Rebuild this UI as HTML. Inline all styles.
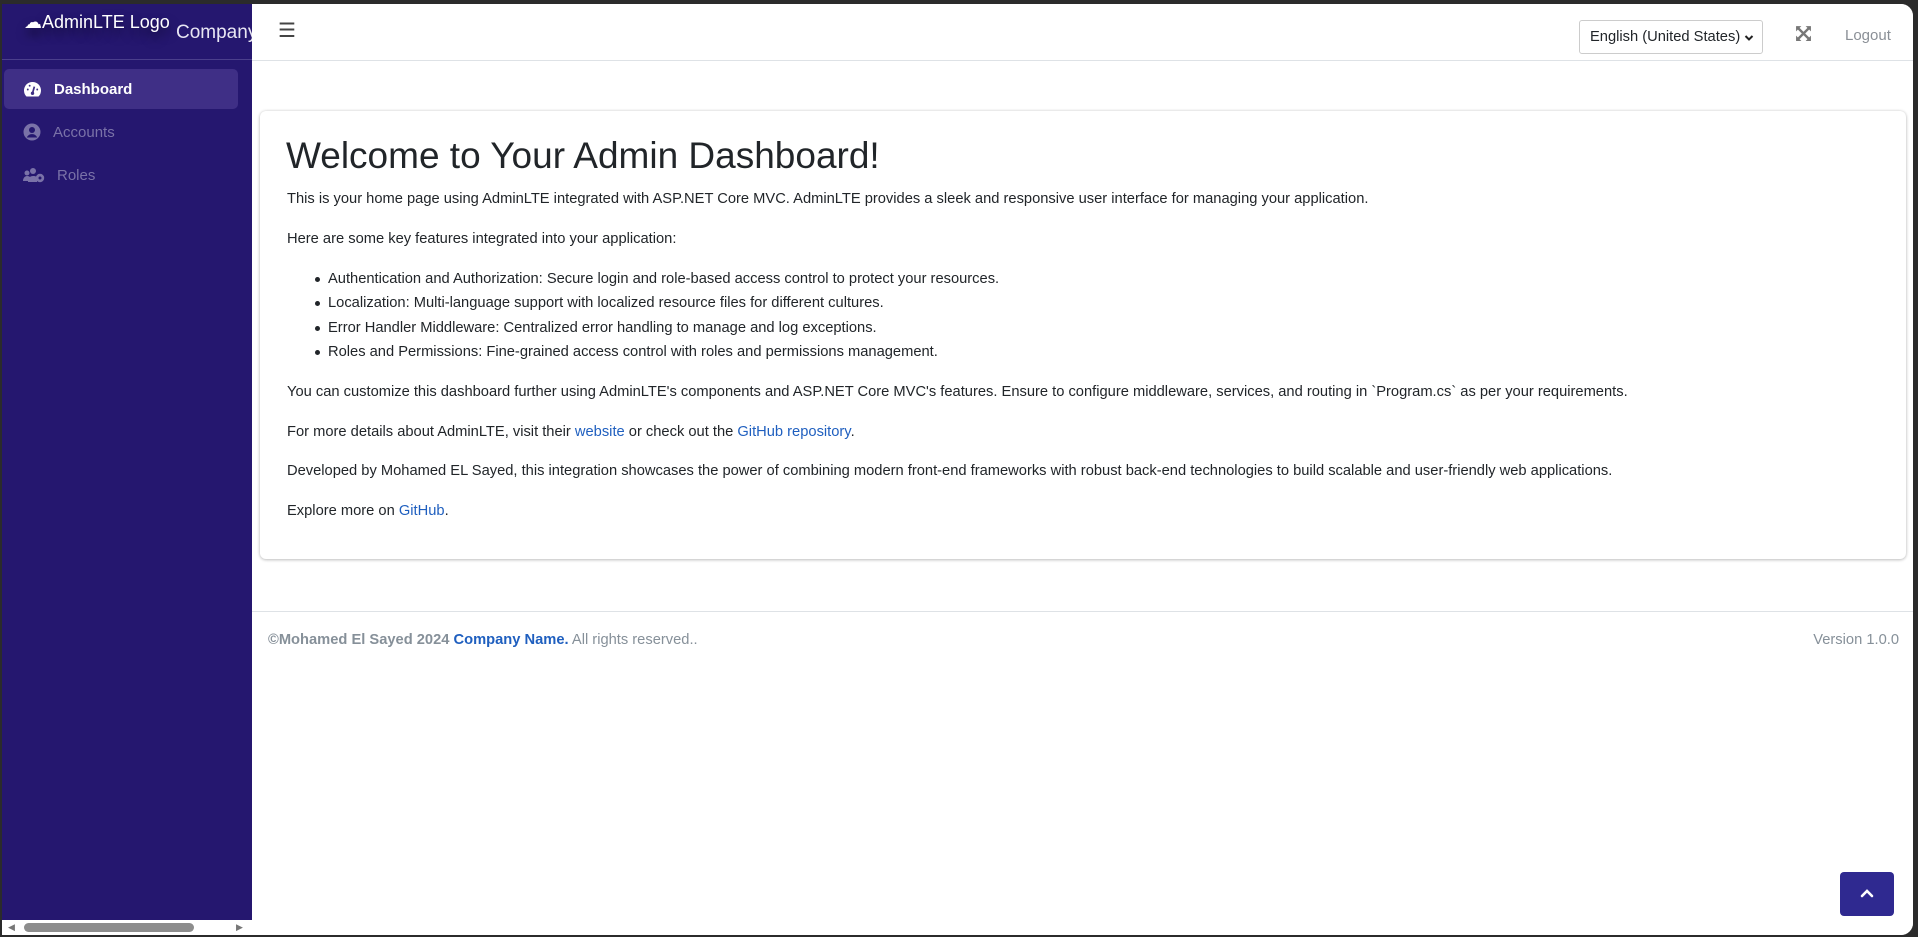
<!DOCTYPE html>
<html><head><meta charset="utf-8">
<style>
*{box-sizing:border-box;margin:0;padding:0}
html,body{width:1918px;height:937px;overflow:hidden;background:#2b2b2b;font-family:"Liberation Sans",sans-serif}
#frame{position:absolute;left:2px;top:4px;width:1911px;height:931px;background:#fff;border-radius:0 12px 12px 0;overflow:hidden}
#side{position:absolute;left:0;top:0;width:250px;height:100%;background:#25176f;box-shadow:4px 0 12px rgba(0,0,0,.12)}
#brand{height:56px;border-bottom:1px solid #4b3f8c;position:relative;color:#fff}
#brand .logo{position:absolute;left:22px;top:8px;font-size:18px;text-shadow:0 6px 10px rgba(0,0,0,.5)}
#brand .comp{position:absolute;left:174px;top:18px;font-size:19px;color:#e8e6f3;white-space:nowrap}
.item{position:absolute;left:2px;width:234px;height:40px;border-radius:5px;font-size:15px;display:flex;align-items:center;padding-left:19px}
.item svg{margin-right:12px}
.act{background:#3f2f86;color:#fff}
.dim{color:#7a72a8}
#scroll{position:absolute;left:0;bottom:0;width:250px;height:15px;background:#fff}
#scroll .th{position:absolute;left:22px;top:3px;width:170px;height:9px;border-radius:5px;background:#8d8d8d}
#nav{position:absolute;left:250px;top:0;right:0;height:57px;border-bottom:1px solid #dee2e6;background:#fff}
#main{position:absolute;left:250px;top:57px;right:0;bottom:0;background:#fff}
#card{position:absolute;left:8px;top:50px;width:1646px;height:448px;background:#fff;border-radius:6px;box-shadow:0 0 3px rgba(0,0,0,.13),0 1px 3px rgba(0,0,0,.2)}
.t{position:absolute;left:27px;font-size:14.7px;color:#212529;white-space:nowrap}
.li{left:68px}
.li:before{content:"";position:absolute;left:-13px;top:6px;width:5px;height:5px;border-radius:50%;background:#212529}
a{color:#1f5fbf;text-decoration:none}
h1{position:absolute;left:26px;top:24px;font-size:37px;font-weight:400;color:#212529;white-space:nowrap}
#foot{position:absolute;left:0;right:0;top:550px;border-top:1px solid #dee2e6;height:60px}
</style></head><body>
<div id="frame">
<div id="side">
 <div id="brand"><span class="logo">&#9729;AdminLTE Logo</span><span class="comp">Company</span></div>
 <div class="item act" style="top:65px">
  <svg width="19" height="17" viewBox="0 0 20 18"><path d="M10 1A9 9 0 0 0 1 10c0 2.5 1 4.8 2.6 6.4h12.8A9 9 0 0 0 19 10 9 9 0 0 0 10 1z" fill="#fff"/><path d="M10 13l2-7" stroke="#3f2f86" stroke-width="1.8"/><circle cx="10" cy="13" r="1.8" fill="#3f2f86"/><circle cx="5" cy="9" r="1" fill="#3f2f86"/><circle cx="15" cy="9" r="1" fill="#3f2f86"/><circle cx="7" cy="5" r="1" fill="#3f2f86"/></svg>
  <span style="font-weight:600">Dashboard</span></div>
 <div class="item dim" style="top:108px">
  <svg width="18" height="18" viewBox="0 0 18 18"><circle cx="9" cy="9" r="8.5" fill="#7a72a8"/><circle cx="9" cy="7" r="3" fill="#25176f"/><path d="M3.8 14.5c1.2-2.5 3-3.4 5.2-3.4s4 .9 5.2 3.4" fill="#25176f"/></svg>
  <span>Accounts</span></div>
 <div class="item dim" style="top:151px">
  <svg width="22" height="16" viewBox="0 0 22 16"><circle cx="4" cy="6" r="2.5" fill="#7a72a8"/><circle cx="10" cy="4" r="3" fill="#7a72a8"/><path d="M0 14c0-3 2-5 4-5s3 1 3 1v4zM5 15c0-4 2-6 5-6s4 1 4 1v5z" fill="#7a72a8"/><circle cx="17" cy="11" r="4.2" fill="#7a72a8"/><circle cx="17" cy="11" r="1.5" fill="#25176f"/></svg>
  <span>Roles</span></div>
 <div id="scroll"><span style="position:absolute;left:6px;top:2px;font-size:9px;color:#777">&#9664;</span><div class="th"></div><span style="position:absolute;left:234px;top:2px;font-size:9px;color:#777">&#9654;</span></div>
</div>
<div id="nav">
 <span style="position:absolute;left:26px;top:14px;font-size:20px;color:#444">&#9776;</span>
 <div style="position:absolute;left:1327px;top:16px;width:184px;height:34px;border:1px solid #ccc;border-radius:3px;font-size:14.7px;color:#212529;padding:8px 0 0 10px">English (United States)
  <svg style="position:absolute;left:164px;top:13px" width="10" height="8" viewBox="0 0 10 8"><path d="M1.5 2l3.5 3.5L8.5 2" stroke="#222" stroke-width="2" fill="none"/></svg></div>
 <svg style="position:absolute;left:1543px;top:21px" width="17" height="17" viewBox="0 0 16 16" fill="none" stroke="#777" stroke-width="2.2"><path d="M2 2l12 12M14 2L2 14"/><path d="M1 1h5L1 6zM15 1h-5l5 5zM1 15h5l-5-5zM15 15h-5l5-5z" fill="#777" stroke="none"/></svg>
 <span style="position:absolute;left:1593px;top:23px;font-size:15px;color:#8a8f96">Logout</span>
</div>
<div id="main">
 <div id="card">
  <h1>Welcome to Your Admin Dashboard!</h1>
  <div class="t" style="top:80px">This is your home page using AdminLTE integrated with ASP.NET Core MVC. AdminLTE provides a sleek and responsive user interface for managing your application.</div>
  <div class="t" style="top:120px">Here are some key features integrated into your application:</div>
  <div class="t li" style="top:160px">Authentication and Authorization: Secure login and role-based access control to protect your resources.</div>
  <div class="t li" style="top:184px">Localization: Multi-language support with localized resource files for different cultures.</div>
  <div class="t li" style="top:209px">Error Handler Middleware: Centralized error handling to manage and log exceptions.</div>
  <div class="t li" style="top:233px">Roles and Permissions: Fine-grained access control with roles and permissions management.</div>
  <div class="t" style="top:273px">You can customize this dashboard further using AdminLTE's components and ASP.NET Core MVC's features. Ensure to configure middleware, services, and routing in `Program.cs` as per your requirements.</div>
  <div class="t" style="top:313px">For more details about AdminLTE, visit their <a>website</a> or check out the <a>GitHub repository</a>.</div>
  <div class="t" style="top:352px">Developed by Mohamed EL Sayed, this integration showcases the power of combining modern front-end frameworks with robust back-end technologies to build scalable and user-friendly web applications.</div>
  <div class="t" style="top:392px">Explore more on <a>GitHub</a>.</div>
 </div>
 <div id="foot">
  <div style="position:absolute;left:16px;top:20px;font-size:14.7px;color:#869099;white-space:nowrap"><b>©Mohamed El Sayed 2024 <a style="color:#1f5fbf">Company Name.</a></b> All rights reserved..</div>
  <div style="position:absolute;right:14px;top:20px;font-size:14.7px;color:#869099">Version 1.0.0</div>
 </div>
 <div style="position:absolute;left:1588px;top:811px;width:54px;height:44px;background:#2f2990;border-radius:4px">
  <svg style="position:absolute;left:20px;top:16px" width="14" height="10" viewBox="0 0 14 10"><path d="M2 8l5-5 5 5" stroke="#fff" stroke-width="2.6" fill="none" stroke-linecap="round"/></svg>
 </div>
</div>
</div>
</body></html>
